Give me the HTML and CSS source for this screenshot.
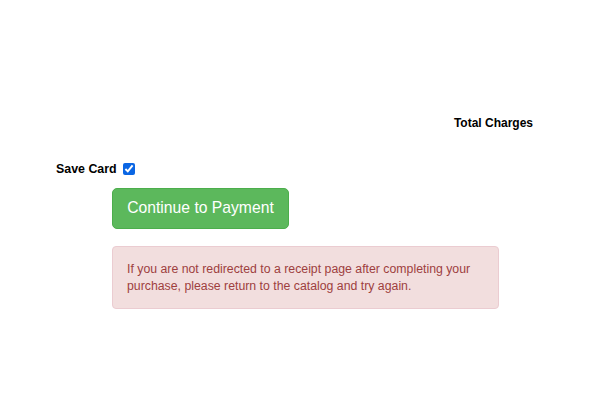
FILE: index.html
```html
<!DOCTYPE html>
<html>
<head>
<meta charset="utf-8">
<link rel="stylesheet" href="styles.css">
</head>
<body>
<div class="page">
  <div class="totals">
    <span class="total-label">Total Charges</span>
  </div>
  <div class="save-row">
    <label class="save-label" for="save">Save Card</label>
    <input id="save" class="save-check" type="checkbox" checked>
  </div>
  <div class="actions">
    <button class="btn-pay">Continue to Payment</button>
    <div class="alert">If you are not redirected to a receipt page after completing your purchase, please return to the catalog and try again.</div>
  </div>
</div>
</body>
</html>
```

FILE: styles.css
```css
html, body {
  margin: 0;
  padding: 0;
  background: #fff;
}
body {
  font-family: "Liberation Sans", Arial, sans-serif;
  color: #000;
}
.page {
  width: 596px;
  padding-top: 115px;
}
.totals {
  display: flex;
  justify-content: flex-end;
  padding-right: 63px;
}
.total-label {
  font-weight: bold;
  font-size: 12px;
  line-height: 16px;
}
.save-row {
  display: flex;
  align-items: center;
  margin-top: 30px;
  padding-left: 56px;
  height: 16px;
}
.save-label {
  font-weight: bold;
  font-size: 12.4px;
}
.save-check {
  margin: 0 0 0 6px;
  width: 12px;
  height: 12px;
  accent-color: #0a66e4;
}
.actions {
  padding-left: 112px;
  margin-top: 11px;
  display: flex;
  flex-direction: column;
  align-items: flex-start;
}
.btn-pay {
  font-family: "Liberation Sans", Arial, sans-serif;
  font-size: 15.7px;
  line-height: 20px;
  white-space: nowrap;
  color: #fff;
  background: #5cb85c;
  border: 1px solid #4cae4c;
  border-radius: 5px;
  padding: 0 0 2px;
  width: 177px;
  height: 41px;
  text-align: center;
  cursor: pointer;
}
.alert {
  margin-top: 17px;
  box-sizing: border-box;
  width: 387px;
  height: 63px;
  padding: 14px 14px;
  background: #f2dede;
  border: 1px solid #ebccd1;
  border-radius: 4px;
  color: #9e3f3e;
  font-size: 12.3px;
  line-height: 17px;
}
```
